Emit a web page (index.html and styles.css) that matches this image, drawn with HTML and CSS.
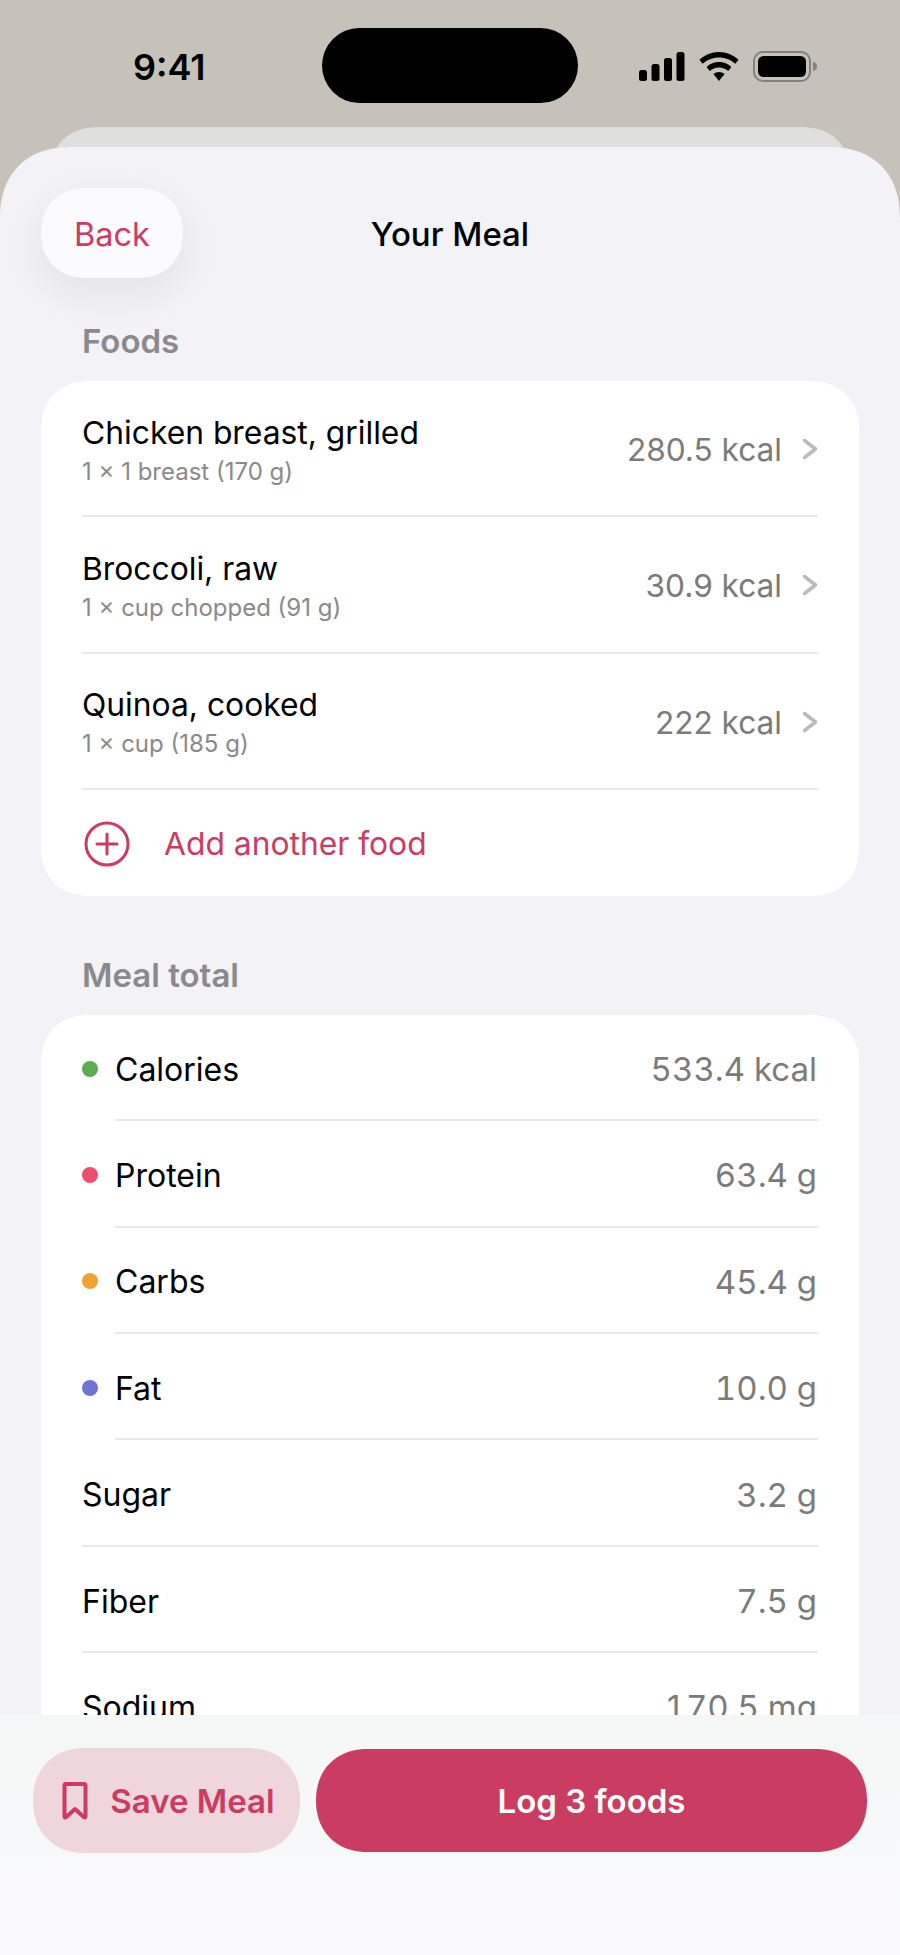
FILE: index.html
```html
<!DOCTYPE html>
<html lang="en">
<head>
<meta charset="utf-8">
<title>Your Meal</title>
<link rel="stylesheet" href="styles.css">
</head>
<body>
<div class="screen">
  <header class="status">
    <span class="time">9:41</span>
    <div class="island"></div>
    <div class="status-icons">
      <svg class="ic-signal" width="46" height="29" viewBox="0 0 46 29"><rect x="0" y="18" width="8" height="11" rx="2.5"/><rect x="12.5" y="12" width="8" height="17" rx="2.5"/><rect x="25" y="6" width="8" height="23" rx="2.5"/><rect x="37.500" y="0" width="8" height="29" rx="2.500"/></svg>
      <svg class="ic-wifi" width="40" height="29" viewBox="0 0 40 29"><path d="M20 0C12.500 0 5.800 3 .5 7.800L3.600 11.800C8 7.800 13.800 5.400 20 5.400S32 7.800 36.400 11.800L39.500 7.800C34.200 3 27.500 0 20 0Z"/><path d="M20 10C15.300 10 11 11.900 7.600 14.900L10.800 18.900C13.300 16.700 16.500 15.400 20 15.400S26.700 16.700 29.200 18.900L32.400 14.900C29 11.900 24.700 10 20 10Z"/><path d="M20 20C17.900 20 16 20.700 14.400 22L20 29L25.600 22C24 20.700 22.100 20 20 20Z"/></svg>
      <svg class="ic-battery" width="65" height="31" viewBox="0 0 65 31"><rect x="1" y="1" width="56" height="29" rx="9" fill="none" stroke="#83817c" stroke-width="2"/><rect x="5" y="5" width="48" height="21" rx="5.500"/><path d="M60 11C62.500 11.500 64 13 64 15.500S62.500 19.500 60 20Z" fill="#83817c"/></svg>
    </div>
  </header>

  <main class="sheet">
    <div class="nav">
      <button class="back">Back</button>
      <h1 class="title">Your Meal</h1>
    </div>

    <section class="group">
      <h2 class="group-label">Foods</h2>
      <div class="card">
        <div class="food">
          <div class="food-text"><div class="food-name">Chicken breast, grilled</div><div class="food-sub">1 × 1 breast (170 g)</div></div>
          <span class="kcal">280.5 kcal</span>
          <svg class="chev" width="16" height="24" viewBox="0 0 16 24"><path d="M2.500 3.500L13.500 12L2.500 20.500"/></svg>
        </div>
        <div class="food">
          <div class="food-text"><div class="food-name">Broccoli, raw</div><div class="food-sub">1 × cup chopped (91 g)</div></div>
          <span class="kcal">30.9 kcal</span>
          <svg class="chev" width="16" height="24" viewBox="0 0 16 24"><path d="M2.500 3.500L13.500 12L2.500 20.500"/></svg>
        </div>
        <div class="food">
          <div class="food-text"><div class="food-name">Quinoa, cooked</div><div class="food-sub">1 × cup (185 g)</div></div>
          <span class="kcal">222 kcal</span>
          <svg class="chev" width="16" height="24" viewBox="0 0 16 24"><path d="M2.500 3.500L13.500 12L2.500 20.500"/></svg>
        </div>
        <div class="add">
          <svg class="add-icon" width="46" height="46" viewBox="0 0 46 46"><circle cx="23" cy="23" r="21"/><path d="M23 13V33M13 23H33"/></svg>
          <span class="add-label">Add another food</span>
        </div>
      </div>
    </section>

    <section class="group">
      <h2 class="group-label">Meal total</h2>
      <div class="card">
        <div class="stat dotted"><i class="dot dot-green"></i><div class="stat-body"><span class="stat-name">Calories</span><span class="stat-val">533.4 kcal</span></div></div>
        <div class="stat dotted"><i class="dot dot-red"></i><div class="stat-body"><span class="stat-name">Protein</span><span class="stat-val">63.4 g</span></div></div>
        <div class="stat dotted"><i class="dot dot-orange"></i><div class="stat-body"><span class="stat-name">Carbs</span><span class="stat-val">45.4 g</span></div></div>
        <div class="stat dotted"><i class="dot dot-blue"></i><div class="stat-body"><span class="stat-name">Fat</span><span class="stat-val">10.0 g</span></div></div>
        <div class="stat"><div class="stat-body"><span class="stat-name">Sugar</span><span class="stat-val">3.2 g</span></div></div>
        <div class="stat"><div class="stat-body"><span class="stat-name">Fiber</span><span class="stat-val">7.5 g</span></div></div>
        <div class="stat"><div class="stat-body"><span class="stat-name">Sodium</span><span class="stat-val">170.5 mg</span></div></div>
      </div>
    </section>
  </main>

  <footer class="actions">
    <button class="save">
      <svg class="save-icon" width="26" height="38" viewBox="0 0 26 38"><path d="M2.500 3.500C2.500 2.500 3 2 4 2H22C23 2 23.500 2.500 23.500 3.500V34.500C23.500 35.500 22.800 35.800 22 35.200L13 27L4 35.200C3.200 35.800 2.500 35.500 2.500 34.500Z"/></svg>
      <span>Save Meal</span>
    </button>
    <button class="log">Log 3 foods</button>
  </footer>
</div>
</body>
</html>
```

FILE: styles.css
```css
* { box-sizing: border-box; }
html, body { margin: 0; padding: 0; }
body { font-family: Inter, "Liberation Sans", sans-serif; background: #c6c2ba; color: #000; }

.screen { position: relative; width: 900px; height: 1955px; overflow: hidden; background: #c6c2ba; }

.status { position: relative; height: 147px; }
.status::after { content: ""; position: absolute; left: 50px; right: 50px; top: 127px; height: 60px; background: #dfdfdd; border-radius: 52px 52px 0 0; corner-shape: superellipse(1.3); }
.time { position: absolute; left: 133px; top: 45px; font-size: 36px; line-height: 44px; font-weight: 600; letter-spacing: 0; }
.island { position: absolute; left: 322px; top: 28px; width: 256px; height: 75px; border-radius: 38px; background: #000; }
.status-icons { position: absolute; left: 639px; top: 51px; display: flex; align-items: center; gap: 14px; }

.sheet { position: relative; z-index: 1; height: 1808px; padding: 41px 41px 0; background: #f2f2f7; border-radius: 72px 72px 0 0; corner-shape: superellipse(1.2); }

.nav { position: relative; display: flex; align-items: center; height: 90px; }
.back { width: 142px; height: 90px; padding: 2px 0 0; border: 0; border-radius: 45px; corner-shape: superellipse(1.12); background: #fbfbfe; color: #cc3c62; font: 400 32.5px Inter, sans-serif; box-shadow: 0 14px 44px rgba(0, 0, 0, .07); }
.title { position: absolute; left: 0; right: 0; margin: 0; padding-top: 2px; text-align: center; font-size: 33px; font-weight: 500; pointer-events: none; }

.group-label { margin: 45px 41px 22px; font-size: 33px; line-height: 36px; font-weight: 600; color: #8a8a8e; }
.group + .group .group-label { margin-top: 61px; margin-bottom: 22px; }

.card { background: #fff; border-radius: 50px; corner-shape: superellipse(1.2); padding: 0 41px; }

.food { display: flex; align-items: center; height: 136.300px; border-bottom: 2px solid #e8e8ea; }
.food-text { flex: 1; padding-top: 2px; }
.food-name { font-size: 31.800px; line-height: 40px; }
.food-sub { margin-top: 5px; font-size: 24px; line-height: 28px; color: #8a8a8a; }
.kcal { padding-top: 3px; font-size: 31.600px; color: #7b7b7b; }
.chev { margin: 2px 0 0 20px; fill: none; stroke: #bbb; stroke-width: 3.500; stroke-linecap: round; stroke-linejoin: round; }

.add { display: flex; align-items: center; height: 106px; gap: 34px; padding: 2px 0 0 2px; }
.add-icon { fill: none; stroke: #cc3c62; stroke-width: 3; stroke-linecap: round; }
.add-label { font-size: 31.800px; color: #cc3c62; }

.stat { display: flex; align-items: center; height: 106.400px; }
.dot { flex: none; width: 16px; height: 16px; margin: 1px 17px 0 0; border-radius: 50%; }
.dot-green { background: #5bad4f; }
.dot-red { background: #ee4d6e; }
.dot-orange { background: #f0a233; }
.dot-blue { background: #6f74d2; }
.stat-body { flex: 1; height: 100%; padding-top: 4px; display: flex; align-items: center; justify-content: space-between; border-bottom: 2px solid #e8e8ea; }
.stat-name { font-size: 32px; }
.stat-val { margin-right: 1px; font-size: 33px; color: #7b7b7b; font-variant-numeric: tabular-nums; }

.actions { position: absolute; z-index: 2; left: 0; right: 0; bottom: 0; height: 240px; padding: 33px 33px 0; display: flex; align-items: flex-start; gap: 16px; background: linear-gradient(#f5f6f6, #fafafc); }
.save { flex: none; display: flex; align-items: center; justify-content: center; gap: 22px; width: 267px; height: 105px; padding: 0 0 0 4px; border: 0; border-radius: 52px; corner-shape: superellipse(1.12); background: #efd5dc; color: #cc3c62; font: 600 33px Inter, sans-serif; }
.save-icon { fill: none; stroke: #cc3c62; stroke-width: 4; stroke-linejoin: round; }
.log { flex: 1; height: 103px; margin-top: 1px; padding: 1px 0 0; border: 0; border-radius: 52px; corner-shape: superellipse(1.12); background: #cb3c62; color: #fff; font: 600 33px Inter, sans-serif; }
```
